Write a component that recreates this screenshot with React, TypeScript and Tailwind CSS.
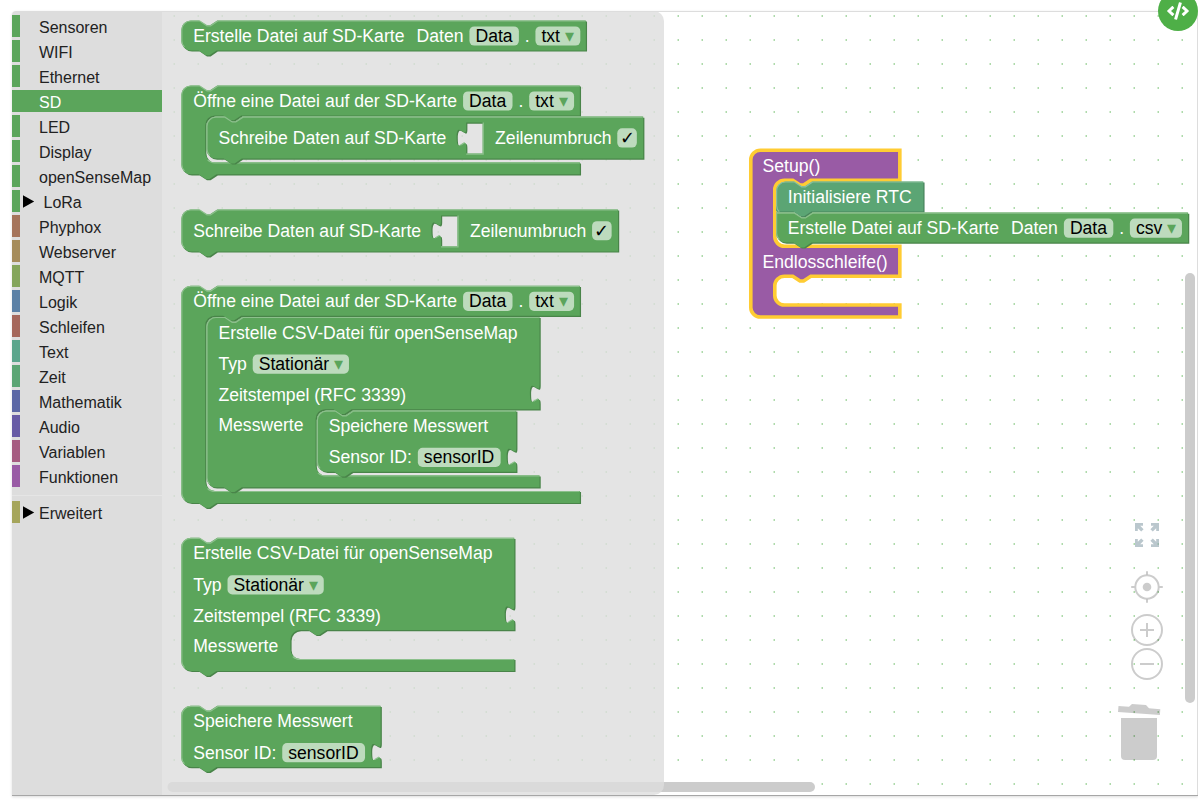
import React from "react";
import { FaCode } from "react-icons/fa";

type Tone = { fill: string; light: string; dark: string };

const GREEN: Tone = { fill: "#5ba55b", light: "#8cc08c", dark: "#498449" };
const TEAL: Tone = { fill: "#5ba574", light: "#8cc09e", dark: "#49845d" };

const categories = [
  { name: "Sensoren", color: "#5ba55b" },
  { name: "WIFI", color: "#5ba55b" },
  { name: "Ethernet", color: "#5ba55b" },
  { name: "SD", color: "#5ba55b", selected: true },
  { name: "LED", color: "#5ba55b" },
  { name: "Display", color: "#5ba55b" },
  { name: "openSenseMap", color: "#5ba55b" },
  { name: "LoRa", color: "#5ba55b", arrow: true, indent: true },
  { name: "Phyphox", color: "#a5745b" },
  { name: "Webserver", color: "#a58c5b" },
  { name: "MQTT", color: "#84a55b" },
  { name: "Logik", color: "#5b80a5" },
  { name: "Schleifen", color: "#a5675b" },
  { name: "Text", color: "#5ba58c" },
  { name: "Zeit", color: "#5ba574" },
  { name: "Mathematik", color: "#5b67a5" },
  { name: "Audio", color: "#675ba5" },
  { name: "Variablen", color: "#a55b80" },
  { name: "Funktionen", color: "#995ba5" },
];

type Category = {
  name: string;
  color: string;
  selected?: boolean;
  arrow?: boolean;
  indent?: boolean;
};

function CategoryRow({ name, color, selected, arrow, indent }: Category) {
  return (
    <div
      className={`flex h-[22px] shrink-0 items-center border-l-8 ${selected ? "bg-[#5ba55b] text-white" : "text-[#222222]"}`}
      style={{ borderColor: color }}
    >
      <span className={`flex shrink-0 items-center pl-[3px] ${indent ? "w-[23.5px]" : "w-[19px]"}`}>
        {arrow && (
          <svg width="12" height="13" viewBox="0 0 12 13">
            <path d="M0 .3 11.2 6.5 0 12.7z" fill="#000" />
          </svg>
        )}
      </span>
      <span className="pt-1 text-[16px] leading-[22px] whitespace-nowrap">{name}</span>
    </div>
  );
}

/* Block outlines are in block units; the workspace zoom is 1.2. */
const NOTCH = "l6,4 3,0 6,-4";
const NOTCH_BACK = "l-6,4 -3,0 -6,-4";
const TAB = "c0,10 -8,-8 -8,7.5 s8,-2.5 8,7.5";
const TOP = `M0,8 A8,8 0 0 1 8,0 H15 ${NOTCH}`;
const END = `H29.5 ${NOTCH_BACK} H8 a8,8 0 0 1 -8,-8 z`;

function mouth(edge: number, height: number, right: number) {
  return `H${edge + 30} ${NOTCH_BACK} H${edge + 8} a8,8 0 0 0 -8,8 v${height - 16} a8,8 0 0 0 8,8 H${right}`;
}
function outerLight(width: number, height: number) {
  return `M2.7,${height - 2.7} A7.5,7.5 0 0 1 .5,${height - 8} V8 A7.5,7.5 0 0 1 8,.5 H15.5 ${NOTCH} H${width - 0.5}`;
}
function mouthLight(edge: number, bottom: number, right: number) {
  return `M${edge + 1.99},${bottom - 1.99} A8.5,8.5 0 0 0 ${edge + 8},${bottom + 0.5} H${right - 0.5}`;
}

function Shape({ d, light, tone = GREEN }: { d: string; light: string; tone?: Tone }) {
  return (
    <>
      <path d={d} fill={tone.dark} fillRule="evenodd" transform="translate(1,1)" />
      <path d={d} fill={tone.fill} fillRule="evenodd" />
      <path d={light} fill="none" stroke={tone.light} strokeWidth="1" />
    </>
  );
}

function Label({ x = 10, y, children }: { x?: number; y: number; children: React.ReactNode }) {
  return (
    <text x={x} y={y} fill="#fff">
      {children}
    </text>
  );
}

function Field({ x, y, w, text, menu }: { x: number; y: number; w: number; text: string; menu?: boolean }) {
  return (
    <>
      <rect x={x} y={y} width={w} height="16" rx="4" fill="#fff" fillOpacity=".6" />
      <text x={x + 5} y={y + 13} fill="#000">
        {text}
        {menu && <tspan fill="#5ba55b">{"\u00a0▾"}</tspan>}
      </text>
    </>
  );
}

function At({ x, y, children }: { x: number; y: number; children: React.ReactNode }) {
  return <g transform={`translate(${x},${y})`}>{children}</g>;
}

function CreateFile({ ext, width, menuWidth }: { ext: string; width: number; menuWidth: number }) {
  return (
    <>
      <Shape d={`${TOP} H${width} v25 ${END}`} light={outerLight(width, 25)} />
      <Label y={18}>Erstelle Datei auf SD-Karte</Label>
      <Label x={196.1} y={18}>Daten</Label>
      <Field x={240.2} y={5} w={41.2} text="Data" />
      <Label x={286.2} y={18}>.</Label>
      <Field x={295.2} y={5} w={menuWidth} text={ext} menu />
    </>
  );
}

function OpenFile({ inner, children }: { inner: number; children: React.ReactNode }) {
  const w = 332.2;
  const bottom = 25 + inner;
  return (
    <>
      <Shape
        d={`${TOP} H${w} v25 ${mouth(20, inner, w)} v10 ${END}`}
        light={`${outerLight(w, bottom + 10)} ${mouthLight(20, bottom, w)}`}
      />
      <Label y={18}>Öffne eine Datei auf der SD-Karte</Label>
      <Field x={234.9} y={5} w={41.2} text="Data" />
      <Label x={281} y={18}>.</Label>
      <Field x={290} y={5} w={37.4} text="txt" menu />
      <At x={21} y={26}>{children}</At>
    </>
  );
}

function WriteData() {
  const w = 364;
  return (
    <>
      <Shape
        d={`${TOP} H${w} v35 ${END} M216.5,5 v5 ${TAB} V30.8 H230.2 V5 z`}
        light={`${outerLight(w, 35)} M230.7,5 V31.3 H216.5 M211.6,23.8 l3.6,-2.1`}
      />
      <Label y={23}>Schreibe Daten auf SD-Karte</Label>
      <Label x={240.6} y={23}>Zeilenumbruch</Label>
      <rect x="342.4" y="9.8" width="16.3" height="16" rx="4" fill="#fff" fillOpacity=".6" />
      <text x="350.6" y="22.8" textAnchor="middle" fill="#000">✓</text>
    </>
  );
}

function CreateCsv({ inner = 24, children }: { inner?: number; children?: React.ReactNode }) {
  const w = 277.6;
  const bottom = 77 + inner;
  return (
    <>
      <Shape
        d={`${TOP} H${w} V56.5 ${TAB} V77 ${mouth(91, inner, w)} v10 ${END}`}
        light={`${outerLight(w, bottom + 10)} ${mouthLight(91, bottom, w)} M${w - 4.9},70.3 l3.6,-2.1`}
      />
      <Label y={18.1}>Erstelle CSV-Datei für openSenseMap</Label>
      <Label y={44.4}>Typ</Label>
      <Field x={38.6} y={31.3} w={80.2} text="Stationär" menu />
      <Label y={70}>Zeitstempel (RFC 3339)</Label>
      <Label y={95.2}>Messwerte</Label>
      {children && <At x={92} y={78}>{children}</At>}
    </>
  );
}

function SaveValue() {
  const w = 166.2;
  return (
    <>
      <Shape
        d={`${TOP} H${w} V31 ${TAB} V51 ${END}`}
        light={`${outerLight(w, 51)} M${w - 4.9},44.8 l3.6,-2.1`}
      />
      <Label y={18}>Speichere Messwert</Label>
      <Label y={44.1}>Sensor ID:</Label>
      <Field x={84.2} y={31.1} w={69} text="sensorID" />
    </>
  );
}

function InitClock() {
  return (
    <>
      <Shape tone={TEAL} d={`${TOP} H122.8 v25 H29.5 ${NOTCH_BACK} H0 z`} light={outerLight(122.8, 28)} />
      <Label x={9.8} y={18}>Initialisiere RTC</Label>
    </>
  );
}

function ChainedCreateFile() {
  const w = 343.4;
  return (
    <>
      <Shape
        d={`M0,0 H15 ${NOTCH} H${w} v25 ${END}`}
        light={`M2.7,22.3 A7.5,7.5 0 0 1 .5,17 V.5 H15.5 ${NOTCH} H${w - 0.5}`}
      />
      <Label x={9.8} y={18}>Erstelle Datei auf SD-Karte</Label>
      <Label x={195.8} y={18}>Daten</Label>
      <Field x={239.9} y={5} w={41.2} text="Data" />
      <Label x={286} y={18}>.</Label>
      <Field x={294.9} y={5} w={43.4} text="csv" menu />
    </>
  );
}

function SetupLoop() {
  const w = 124.2;
  return (
    <>
      <path
        d={`M0,8 A8,8 0 0 1 8,0 H${w} V25 ${mouth(20, 55, w)} V105 ${mouth(20, 24, w)} V139 H8 a8,8 0 0 1 -8,-8 z`}
        fill="#995ba5"
        stroke="#ffcc33"
        strokeWidth="3"
      />
      <Label x={9.8} y={18.2}>Setup()</Label>
      <Label x={9.8} y={98}>Endlosschleife()</Label>
      <At x={21} y={26}>
        <InitClock />
      </At>
      <At x={21} y={52}>
        <ChainedCreateFile />
      </At>
    </>
  );
}

function Placed({ x, y, children }: { x: number; y: number; children: React.ReactNode }) {
  return (
    <g transform={`translate(${x},${y}) scale(1.2)`} fontSize="14.667">
      {children}
    </g>
  );
}

function Controls() {
  const arrow = "M0,0 H8 V2.8 H5.2 L8.6,6.2 L6.2,8.6 L2.8,5.2 V8 H0 z";
  return (
    <>
      <g fill="#90a4ae" fillOpacity=".62">
        <path transform="translate(1135,523)" d={arrow} />
        <path transform="translate(1150.4,531.6) scale(1,-1)" d="M8.6,8.6 H.6 V5.8 H3.4 L0,2.4 L2.4,0 L5.8,3.4 V.6 H8.6 z" />
        <path transform="translate(1135,547) scale(1,-1)" d={arrow} />
        <path transform="translate(1150.4,538.4)" d="M8.6,8.6 H.6 V5.8 H3.4 L0,2.4 L2.4,0 L5.8,3.4 V.6 H8.6 z" />
      </g>
      <g stroke="#000" strokeOpacity=".2" strokeWidth="2" fill="none">
        <circle cx="1147" cy="587" r="11.7" />
        <path d="M1147,571.2 v3.2 M1147,599.6 v3.2 M1131.2,587 h3.2 M1159.6,587 h3.2" />
        <circle cx="1147" cy="587" r="4.3" fill="#000" fillOpacity=".2" stroke="none" />
        <circle cx="1147" cy="630" r="15" />
        <path d="M1140,629 h6 v-6 h2 v6 h6 v2 h-6 v6 h-2 v-6 h-6 z" fill="#000" fillOpacity=".2" stroke="none" />
        <circle cx="1147" cy="664" r="15" />
        <path d="M1140,664 h14" />
      </g>
      <g fill="#000" fillOpacity=".2">
        <path d="M1118.5,706 l10.5,.7 3,-2.7 14,.9 3,3.4 11.3,.9 -.4,5.8 -41.9,-3 z" />
        <path d="M1121,718 h36 v38 a4,4 0 0 1 -4,4 h-28 a4,4 0 0 1 -4,-4 z" />
      </g>
    </>
  );
}

function Workspace() {
  return (
    <svg className="block h-[785px] w-[1036px]" viewBox="162 11 1036 785">
      <defs>
        <pattern id="grid" width="24" height="24" patternUnits="userSpaceOnUse">
          <rect x="5.5" y="15.3" width="1.5" height="1.4" fill="#4eaf47" fillOpacity=".65" />
        </pattern>
      </defs>
      <rect x="162" y="12" width="1035" height="783" fill="#fff" />
      <rect x="162" y="12" width="1035" height="783" fill="url(#grid)" />
      <path d="M162,11.5 H1197.5 V795" fill="none" stroke="#dddddd" />
      <Controls />
      <rect x="167.5" y="782" width="647.5" height="10" rx="5" fill="#cccccc" />
      <rect x="1185" y="273" width="10" height="430" rx="5" fill="#cccccc" />
      <Placed x={750.8} y={150.2}>
        <SetupLoop />
      </Placed>
    </svg>
  );
}

function Flyout() {
  return (
    <div className="absolute top-0 left-[150px] h-[784px] w-[502px] rounded-r-[10px] bg-[#dddddd]/80">
      <svg className="block h-[784px] w-[502px]" viewBox="162 11 502 784">
        <Placed x={181.2} y={20.4}>
          <CreateFile ext="txt" width={337.2} menuWidth={37.4} />
        </Placed>
        <Placed x={181.2} y={85.4}>
          <OpenFile inner={39}>
            <WriteData />
          </OpenFile>
        </Placed>
        <Placed x={181.2} y={209.4}>
          <WriteData />
        </Placed>
        <Placed x={181.2} y={285.7}>
          <OpenFile inner={146}>
            <CreateCsv inner={55}>
              <SaveValue />
            </CreateCsv>
          </OpenFile>
        </Placed>
        <Placed x={181.2} y={537.7}>
          <CreateCsv />
        </Placed>
        <Placed x={181.2} y={705.8}>
          <SaveValue />
        </Placed>
      </svg>
    </div>
  );
}

export default function App() {
  return (
    <div className="relative h-[808px] w-[1198px] overflow-hidden bg-white pt-[11px] pl-3 font-['Liberation_Sans',Arial,sans-serif]">
      <div className="relative flex h-[785px] w-[1186px] rounded-tl-[4px] shadow-[0_1px_3px_rgba(0,0,0,0.14)]">
        <nav className="flex h-[784px] w-[150px] shrink-0 flex-col gap-[3px] overflow-hidden rounded-tl-[4px] bg-[#dddddd] pt-1">
          {categories.map((c) => (
            <CategoryRow key={c.name} {...c} />
          ))}
          <div className="mt-[5px] mb-[2px] h-px shrink-0 bg-[#e5e5e5]" />
          <CategoryRow name="Erweitert" color="#a5a55b" arrow />
        </nav>
        <Workspace />
        <Flyout />
        <div className="absolute bottom-0 left-0 h-px w-full bg-[#a6a6a6]" />
      </div>
      <button className="absolute -top-[9px] left-[1158px] flex size-10 items-center justify-center rounded-full bg-[#4eaf47] text-white">
        <FaCode className="h-[18px] w-[22px]" />
      </button>
    </div>
  );
}
